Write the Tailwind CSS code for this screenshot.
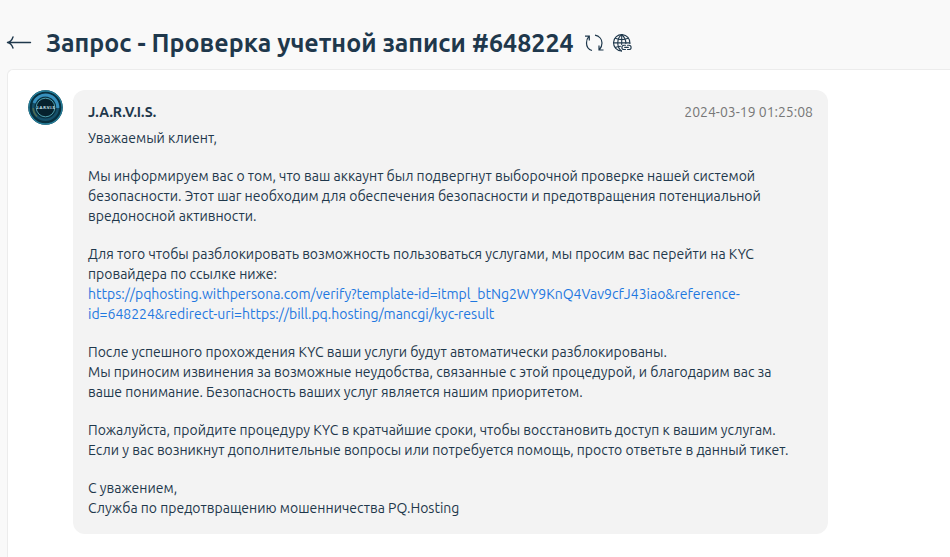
<!DOCTYPE html>
<html lang="ru">
<head>
    <meta charset="UTF-8">
    <meta name="viewport" content="width=device-width, initial-scale=1.0">
    <script src="https://cdn.jsdelivr.net/npm/@tailwindcss/browser@4"></script>
    <title>Запрос #648224</title>
</head>
<body class="min-h-screen flex flex-col bg-[#f9f9f9] font-['Ubuntu','Noto_Sans',sans-serif] text-sm text-[#1f384c]">

    <header class="flex items-center pt-[29px] pb-3 pl-1.5">
        <a href="#" aria-label="Назад" class="mr-3.5">
            <svg class="w-[26px] h-5" viewBox="0 0 26 20" fill="none" stroke="currentColor" stroke-width="1.4" stroke-linecap="round" stroke-linejoin="round">
                <path d="M24.500 9.500H1.500M7 4C6 7 4 9 1.500 9.500C4 10 6 12 7 15" />
            </svg>
        </a>
        <h1 class="text-[25px] leading-7 font-bold whitespace-nowrap">Запрос - Проверка учетной записи #648224</h1>
        <button type="button" aria-label="Обновить" class="ml-2.5">
            <svg class="size-5" viewBox="0 0 20 20" fill="none" stroke="currentColor" stroke-width="1.2">
                <path d="M8 17.500C4.500 16.500 2.500 13.500 2.500 10C2.500 7 3.500 5 5 3.200M1 3.200H5.300V7.500" />
                <path d="M11 2.200C15.500 3 18 6.500 18 10C18 12.500 17 15 15.200 17M19.500 17H15V12.500" />
            </svg>
        </button>
        <button type="button" aria-label="Скопировать ссылку" class="ml-2">
            <svg class="size-5" viewBox="0 0 20 20" fill="none" stroke="currentColor" stroke-width="1.1" stroke-linecap="round">
                <path d="M9.500 18A8.200 8.200 0 1 1 17.900 10.500" />
                <path d="M9.700 1.700V11.500M1.500 9.900H17.800M3.300 5.200C7 6.800 12.500 6.800 16.100 5.200M3.300 14.600C5 13.800 6.500 13.500 8.500 13.300" />
                <path d="M9.700 1.700C4.500 5 4.500 14.500 9.500 18M9.700 1.700C12.700 4 13.800 7 13.900 10.500" />
                <path d="M13.500 16.500H12A2 2 0 0 1 12 12.300H13.500M15.500 12.300H17A2 2 0 0 1 17 16.500H15.500M12.700 14.400H16.300" />
            </svg>
        </button>
    </header>

    <main class="grow flex items-start gap-2.5 ml-[7px] pt-5 pl-5 pb-6 bg-white border-l border-t border-[#ececec] rounded-tl-md">
        <svg class="size-[35px] shrink-0" viewBox="0 0 35 35" role="img" aria-label="J.A.R.V.I.S.">
            <circle cx="17.500" cy="17.500" r="17.300" fill="#08303f" />
            <circle cx="17.500" cy="17.500" r="16.500" fill="none" stroke="#267f9b" stroke-width="1.300" />
            <circle cx="17.500" cy="17.500" r="12.300" fill="none" stroke="#15506a" stroke-width="2.500" />
            <path d="M6 13A12.300 12.300 0 0 1 29.800 18" fill="none" stroke="#3790bd" stroke-width="3" />
            <path d="M5.200 18A12.300 12.300 0 0 0 9 26.500" fill="none" stroke="#526c50" stroke-width="1.500" />
            <circle cx="17.500" cy="17.500" r="9.300" fill="#06212d" stroke="#4f9dac" stroke-width="1" />
            <text x="17.500" y="19" text-anchor="middle" font-size="4" font-weight="700" fill="#d8f4fa">J.A.R.V.I.S</text>
        </svg>

        <article class="w-full max-w-[755px] mr-5 px-[15px] pt-3 pb-4 bg-[#f3f3f3] rounded-xl">
            <div class="flex justify-between leading-5">
                <h2 class="font-bold">J.A.R.V.I.S.</h2>
                <time datetime="2024-03-19T01:25:08" class="text-[#777777]">2024-03-19 01:25:08</time>
            </div>
            <div class="mt-1.5 flex flex-col gap-[18px] leading-5">
                <p>Уважаемый клиент,</p>
                <p>
                    Мы информируем вас о том, что ваш аккаунт был подвергнут выборочной проверке нашей системой<br>
                    безопасности. Этот шаг необходим для обеспечения безопасности и предотвращения потенциальной<br>
                    вредоносной активности.
                </p>
                <p>
                    Для того чтобы разблокировать возможность пользоваться услугами, мы просим вас перейти на KYC<br>
                    провайдера по ссылке ниже:<br>
                    <a href="#" class="text-[#1f78e0]">https://pqhosting.withpersona.com/verify?template-id=itmpl_btNg2WY9KnQ4Vav9cfJ43iao&amp;reference-<br>id=648224&amp;redirect-uri=https://bill.pq.hosting/mancgi/kyc-result</a>
                </p>
                <p>
                    После успешного прохождения KYC ваши услуги будут автоматически разблокированы.<br>
                    Мы приносим извинения за возможные неудобства, связанные с этой процедурой, и благодарим вас за<br>
                    ваше понимание. Безопасность ваших услуг является нашим приоритетом.
                </p>
                <p>
                    Пожалуйста, пройдите процедуру KYC в кратчайшие сроки, чтобы восстановить доступ к вашим услугам.<br>
                    Если у вас возникнут дополнительные вопросы или потребуется помощь, просто ответьте в данный тикет.
                </p>
                <p>
                    С уважением,<br>
                    Служба по предотвращению мошенничества PQ.Hosting
                </p>
            </div>
        </article>
    </main>

</body>
</html>
